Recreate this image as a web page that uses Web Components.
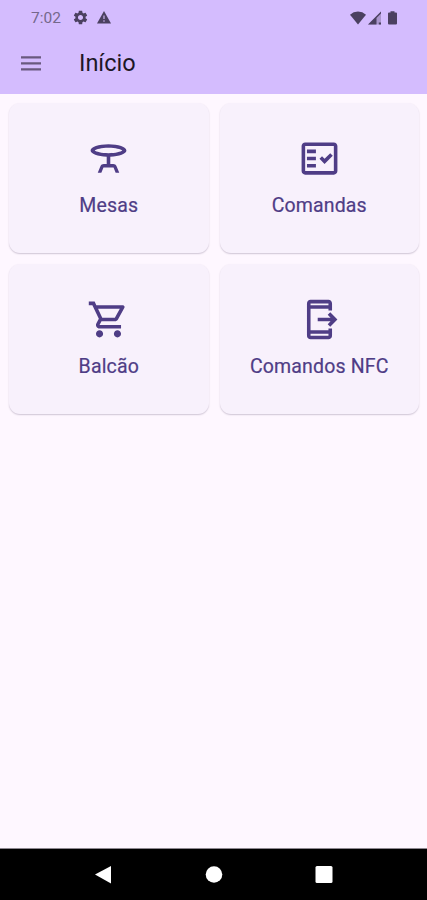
<!DOCTYPE html>
<html lang="pt-BR">
<head>
<meta charset="utf-8">
<meta name="viewport" content="width=device-width, initial-scale=1">
<title>Início</title>
<style>
  html, body {
    height: 100%;
    margin: 0;
  }
  body {
    font-family: Roboto, "Liberation Sans", sans-serif;
    background: #fef7ff;
    overflow: hidden;
  }
</style>
</head>
<body>
<app-screen>
  <status-bar slot="top" time="7:02"></status-bar>
  <app-bar slot="top">Início</app-bar>
  <menu-card icon="table">Mesas</menu-card>
  <menu-card icon="check">Comandas</menu-card>
  <menu-card icon="cart">Balcão</menu-card>
  <menu-card icon="mobile">Comandos NFC</menu-card>
  <nav-buttons slot="bottom"></nav-buttons>
</app-screen>

<script>
(function () {
  const icons = {
    table:
      "M22 7.5C22 5.57 17.52 4 12 4S2 5.57 2 7.5c0 1.81 3.95 3.31 9 3.48V15H9.35c-.82 0-1.55.5-1.86 1.26L6 20h2l1.2-3h5.6l1.2 3h2l-1.5-3.74C16.2 15.5 15.46 15 14.65 15H13v-4.02c5.05-.17 9-1.67 9-3.48zM12 6c4.05 0 6.74.86 7.72 1.5C18.74 8.14 16.05 9 12 9s-6.74-.86-7.72-1.5C5.26 6.86 7.95 6 12 6z",
    check:
      "M20 3H4c-1.1 0-2 .9-2 2v14c0 1.1.9 2 2 2h16c1.1 0 2-.9 2-2V5c0-1.1-.9-2-2-2zm0 16H4V5h16v14zM19.41 10.42 17.99 9l-3.17 3.17-1.41-1.42L12 12.16 14.82 15zM5 7h5v2H5zM5 11h5v2H5zM5 15h5v2H5z",
    cart:
      "M15.55 13c.75 0 1.41-.41 1.75-1.03l3.58-6.49c.37-.66-.11-1.48-.87-1.48H5.21l-.94-2H1v2h2l3.6 7.59-1.35 2.44C4.52 15.37 5.48 17 7 17h12v-2H7l1.1-2h7.45zM6.16 6h12.15l-2.76 5H8.53L6.16 6zM7 18c-1.1 0-1.99.9-1.99 2S5.9 22 7 22s2-.9 2-2-.9-2-2-2zm10 0c-1.1 0-1.99.9-1.99 2s.89 2 1.99 2 2-.9 2-2-.9-2-2-2z",
    mobile:
      "M17 17h2v4c0 1.1-.9 2-2 2H7c-1.1 0-2-.9-2-2V3c0-1.1.9-2 2-2h10c1.1 0 2 .9 2 2v4h-2V6H7v12h10v-1zm0 3H7v1h10v-1zM7 4h10V3H7v1zm15 8l-4-4-1.41 1.41L18.17 11H11v2h7.17l-1.59 1.59L18 16l4-4z",
  };

  class AppScreen extends HTMLElement {
    constructor() {
      super();
      this.attachShadow({ mode: "open" });
      this.shadowRoot.innerHTML = `
        <style>
          :host {
            display: flex;
            flex-direction: column;
            height: 100vh;
          }
          header {
            height: 94px;
            background: #d4bcfe;
          }
          main {
            flex: 1;
            display: grid;
            grid-template-columns: 1fr 1fr;
            grid-auto-rows: 150px;
            align-content: start;
            gap: 11.5px 11px;
            padding: 8.5px 8px 0 9px;
          }
        </style>
        <header><slot name="top"></slot></header>
        <main><slot></slot></main>
        <slot name="bottom"></slot>
      `;
    }
  }

  class StatusBar extends HTMLElement {
    constructor() {
      super();
      const time = this.getAttribute("time");
      this.attachShadow({ mode: "open" });
      this.shadowRoot.innerHTML = `
        <style>
          :host {
            display: flex;
            align-items: center;
            height: 35px;
            padding: 0 30px 0 31px;
            color: #4b4060;
            font-size: 15.5px;
          }
          span {
            width: 40.5px;
            color: #75688b;
          }
          svg {
            display: block;
            fill: currentColor;
          }
          .warn {
            margin-left: 8px;
          }
          .wifi {
            margin-left: auto;
          }
          .signal {
            margin-left: 2px;
          }
          .battery {
            margin-left: 7px;
          }
        </style>
        <span>${time}</span>
        <svg width="17" height="17" viewBox="0 0 24 24"><path d="M19.14 12.94c.04-.3.06-.61.06-.94 0-.32-.02-.64-.07-.94l2.03-1.58c.18-.14.23-.41.12-.61l-1.92-3.32c-.12-.22-.37-.29-.59-.22l-2.39.96c-.5-.38-1.03-.7-1.62-.94l-.36-2.54c-.04-.24-.24-.41-.48-.41h-3.84c-.24 0-.43.17-.47.41l-.36 2.54c-.59.24-1.13.57-1.62.94l-2.39-.96c-.22-.08-.47 0-.59.22L2.74 8.87c-.12.21-.08.47.12.61l2.03 1.58c-.05.3-.09.63-.09.94s.02.64.07.94l-2.03 1.58c-.18.14-.23.41-.12.61l1.92 3.32c.12.22.37.29.59.22l2.39-.96c.5.38 1.03.7 1.62.94l.36 2.54c.05.24.24.41.48.41h3.84c.24 0 .44-.17.47-.41l.36-2.54c.59-.24 1.13-.56 1.62-.94l2.39.96c.22.08.47 0 .59-.22l1.92-3.32c.12-.22.07-.47-.12-.61l-2.01-1.58zM12 15.6c-1.98 0-3.6-1.62-3.6-3.6s1.62-3.6 3.6-3.6 3.6 1.62 3.6 3.6-1.62 3.6-3.6 3.6z"/></svg>
        <svg class="warn" width="14" height="13" viewBox="0 0 14 13"><path d="M7 0 14 12.5H0z"/><path d="M6.3 4.5h1.4v3.6H6.3zM6.3 9.3h1.4v1.4H6.3z" fill="#b9a3dc"/></svg>
        <svg class="wifi" width="16" height="14" viewBox="0 0 16 14"><path d="M0 3.7Q3.4.6 8 .6t8 3.1L8 13.5z"/></svg>
        <svg class="signal" width="13" height="14" viewBox="0 0 13 14"><path d="M13 .5v13H0z" opacity=".3"/><path d="M8.5 5v8.5H0zM8.5 5 13 .5v1.9L8.5 6.9zM10.8 11.5H13v2h-2.2z"/></svg>
        <svg class="battery" width="9" height="14" viewBox="0 0 9 14"><path d="M2.5.2h4v1.3H8q1 0 1 1v10q0 1-1 1H1q-1 0-1-1v-10q0-1 1-1h1.5z"/></svg>
      `;
    }
  }

  class AppBar extends HTMLElement {
    constructor() {
      super();
      this.attachShadow({ mode: "open" });
      this.shadowRoot.innerHTML = `
        <style>
          :host {
            display: flex;
            align-items: center;
            gap: 38px;
            height: 56px;
            padding-left: 21px;
            color: #1d1726;
            font-size: 23.5px;
          }
          svg {
            display: block;
            fill: #69597f;
          }
        </style>
        <svg width="20" height="16" viewBox="0 0 20 16"><path d="M0 1.2h20v2.4H0zM0 7.2h20v2.4H0zM0 13.2h20v2.4H0z"/></svg>
        <slot></slot>
      `;
    }
  }

  class MenuCard extends HTMLElement {
    constructor() {
      super();
      const icon = icons[this.getAttribute("icon")];
      this.attachShadow({ mode: "open" });
      this.shadowRoot.innerHTML = `
        <style>
          :host {
            display: flex;
            flex-direction: column;
            align-items: center;
            box-sizing: border-box;
            padding-top: 34px;
            border-radius: 11px;
            background: #f8f1fc;
            box-shadow: 0 1px 1.5px rgba(60, 40, 80, 0.24);
            color: #4f3d86;
            font-size: 19.5px;
            letter-spacing: 0.15px;
            white-space: nowrap;
            -webkit-text-stroke: 0.2px currentColor;
          }
          svg {
            display: block;
            fill: currentColor;
          }
          .label {
            margin-top: 14px;
            line-height: 24px;
          }
        </style>
        <svg width="43" height="43" viewBox="0 0 24 24"><path fill-rule="evenodd" d="${icon}"/></svg>
        <div class="label"><slot></slot></div>
      `;
    }
  }

  class NavButtons extends HTMLElement {
    constructor() {
      super();
      this.attachShadow({ mode: "open" });
      this.shadowRoot.innerHTML = `
        <style>
          :host {
            display: flex;
            align-items: center;
            justify-content: center;
            gap: 92px;
            box-sizing: border-box;
            height: 52px;
            border-top: 1px solid #8d8890;
            background: #000;
          }
          svg {
            display: block;
            fill: #fff;
          }
        </style>
        <svg width="18" height="18" viewBox="0 0 18 18"><path d="M0 8.5 16 0v17.5z"/></svg>
        <svg width="18" height="18" viewBox="0 0 18 18"><circle cx="9" cy="8.5" r="8.3"/></svg>
        <svg width="18" height="18" viewBox="0 0 18 18"><rect x=".5" y="0" width="17" height="17" rx="1.5"/></svg>
      `;
    }
  }

  window.customElements.define("app-screen", AppScreen);
  window.customElements.define("status-bar", StatusBar);
  window.customElements.define("app-bar", AppBar);
  window.customElements.define("menu-card", MenuCard);
  window.customElements.define("nav-buttons", NavButtons);
})();
</script>
</body>
</html>
